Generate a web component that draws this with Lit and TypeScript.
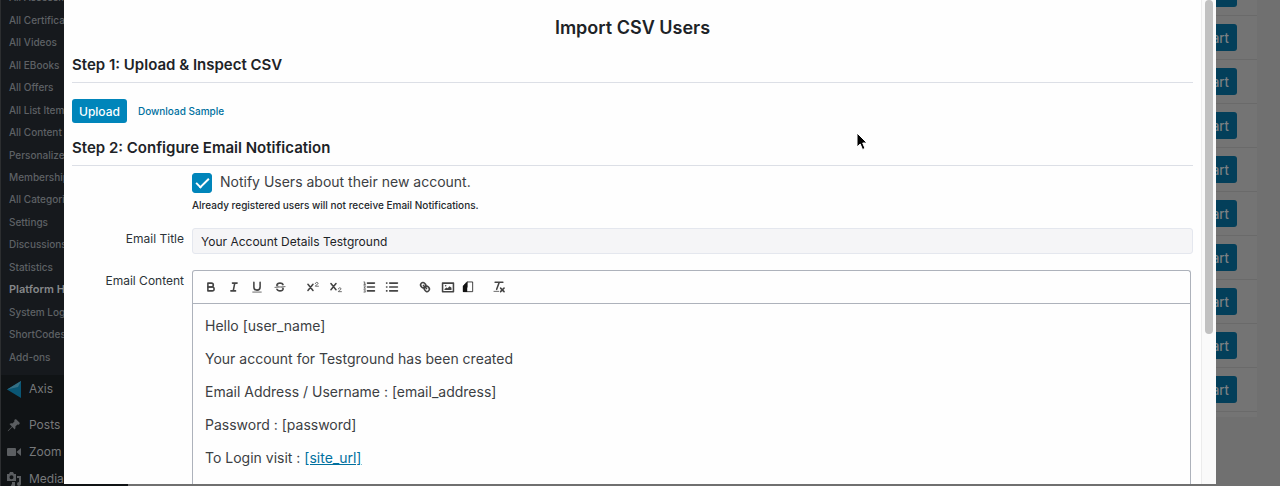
import { LitElement, html, svg, css } from "lit";
import { customElement, state } from "lit/decorators.js";

const MENU = ["All Assessments", "All Certificates", "All Videos", "All EBooks", "All Offers", "All List Items", "All Content", "Personalized", "Memberships", "All Categories", "Settings", "Discussions", "Statistics", "Platform Help", "System Logs", "ShortCodes", "Add-ons"];

const ICONS: Record<string, any> = {
  Bold: svg`<path d="M5,4H9.5A2.5,2.5,0,0,1,9.5,9H5Z"/><path d="M5,9h5.5A2.5,2.5,0,0,1,10.500,14H5Z"/>`,
  Italic: svg`<path d="M7,4H13M5,14H11M8,14L10,4"/>`,
  Underline: svg`<path d="M5,3V9a4,4,0,0,0,8,0V3"/><rect class="f" height="1" width="12" x="3" y="15"/>`,
  Strike: svg`<path class="t" d="M15.500,8.500L2.500,9.500"/><path class="f" d="M9.007,8C6.542,7.791,6,7.519,6,6.5,6,5.792,7.283,5,9,5c1.571,0,2.765.679,2.969,1.309a1,1,0,0,0,1.9-.617C13.356,4.106,11.354,3,9,3,6.2,3,4,4.538,4,6.5a3.2,3.2,0,0,0,.5,1.843Z"/><path class="f" d="M8.984,10C11.457,10.208,12,10.479,12,11.5c0,.708-1.283,1.5-3,1.5-1.571,0-2.765-.679-2.969-1.309a1,1,0,1,0-1.9.617C4.644,13.894,6.646,15,9,15c2.8,0,5-1.538,5-3.5a3.2,3.2,0,0,0-.5-1.843Z"/>`,
  Superscript: svg`<path d="M2.500,5.500L9,13.500M9,5.500L2.500,13.500"/><path class="t" d="M12,4.500C12,2.500 15.500,2.500 15.500,4.500C15.500,5.700 12,6.500 12,8H16"/>`,
  Subscript: svg`<path d="M2.500,4.500L9,12.500M9,4.500L2.500,12.500"/><path class="t" d="M12,11.500C12,9.500 15.500,9.500 15.500,11.500C15.500,12.700 12,13.500 12,15H16"/>`,
  "Ordered list": svg`<path d="M7,4H16M7,9H16M7,14H16"/><path class="t" d="M2.500,2.500H3.500V5.500M2.500,5.500H4.500M2.500,7.500H4.500L2.500,10.500H4.500M2.500,12.500H4.500L3.500,14L4.500,15.500H2.500"/>`,
  "Bullet list": svg`<path d="M6,4H16M6,9H16M6,14H16M2,4H2.500M2,9H2.500M2,14H2.500"/>`,
  Link: svg`<path d="M7,7L11,11"/><path d="M8.9,4.577a3.476,3.476,0,0,1,.36,4.679A3.476,3.476,0,0,1,4.577,8.9C3.185,7.5,2.035,6.4,4.217,4.217S7.5,3.185,8.9,4.577Z"/><path d="M13.423,9.1a3.476,3.476,0,0,0-4.679-.36,3.476,3.476,0,0,0,.36,4.679c1.392,1.392,2.5,2.542,4.679.36S14.815,10.5,13.423,9.1Z"/>`,
  Image: svg`<rect height="11" width="14" x="2" y="4"/><circle class="f" cx="6" cy="7.500" r="1"/><path class="f" d="M4.500,13V11.500L7,9.500L8.500,10.500L11,8L13.500,10V13Z"/>`,
  File: svg`<path class="k" d="M8,2.500H15V15H3V8Z"/><path class="b" d="M2.500,8L8.500,2V9.500H8V15.500H2.500Z"/>`,
  "Clear formatting": svg`<path d="M4,3H14M6,12L9.350,3M11,10.500L15.500,15M15.500,10.500L11,15"/><rect class="f" height="1" width="7" x="2" y="14"/>`,
};

const GROUPS = [
  ["Bold", "Italic", "Underline", "Strike"],
  ["Superscript", "Subscript"],
  ["Ordered list", "Bullet list"],
  ["Link", "Image", "File"],
  ["Clear formatting"],
];

@customElement("admin-backdrop")
class AdminBackdrop extends LitElement {
  static styles = css`
    :host { display: flex; height: 100%; overflow: hidden; background: #707070; }
    a { color: inherit; text-decoration: none; }
    .side { width: 128px; flex: none; box-sizing: border-box; background: #101315; border-left: 1px solid #2c2e30; color: #77797b; font-size: 13px; white-space: nowrap; overflow: hidden; }
    .sub { display: grid; grid-auto-rows: 1fr; align-items: center; height: 382px; margin: -14px 0 0; padding: 0 0 7px 8px; background: #16191d; color: #5e6165; font-size: 10px; font-weight: 500; list-style: none; }
    .current { font-size: 11px; font-weight: 600; color: #85878a; }
    .top { display: flex; align-items: center; gap: 8px; padding-left: 6px; height: 27px; font-size: 12px; }
    .axis { margin-bottom: 9px; }
    .top svg { width: 14px; height: 14px; flex: none; fill: #5b5e61; }
    .main { flex: 1; display: flex; justify-content: flex-end; align-items: flex-start; }
    .card { display: flex; flex-direction: column; margin: -28px 23px 0 0; padding-bottom: 5px; background: #747474; }
    .row { display: flex; align-items: center; justify-content: flex-end; height: 44px; box-sizing: border-box; border-bottom: 1px solid #6a6a6a; padding: 0 20px 0 600px; }
    .start { box-sizing: border-box; height: 27px; width: 52px; padding: 0 8px 0 0; text-align: right; border: 0; border-radius: 3px; background: #033f5a; color: #7d8183; font: 500 13px Inter, sans-serif; }
  `;
  render() {
    return html`
      <nav class="side">
        <ul class="sub">
          ${MENU.map((m) => html`<li class=${m === "Platform Help" ? "current" : "item"}><a href="#">${m}</a></li>`)}
        </ul>
        <a class="top axis" href="#"><svg viewBox="0 0 14 14" overflow="visible"><path fill="#0a5674" d="M0,7.500L14,-1V16Z"/><path fill="#357085" d="M0,7.500L14,-1L11,5Z"/></svg>Axis</a>
        <a class="top" href="#"><svg viewBox="0 0 20 20"><path d="M10.400 3.000l1-.9c.6-.6 1.500-.3 2 .2l4.300 4.300c.6.6.7 1.500.1 2.100l-1 .8-1.900-.2-2.900 3c.3 1.700 0 3.200-1 4.100l-3.400-3.400L2 18.600 1 19l.500-1.100 5.500-5.700-3.500-3.500c1-1 2.700-1.300 4.200-.9l2.900-2.900z"/></svg>Posts</a>
        <a class="top" href="#"><svg viewBox="0 0 14 14"><rect x="0" y="3" width="9" height="8" rx="1"/><path d="M9.500,7L14,3V11Z"/></svg>Zoom Meeting</a>
        <a class="top" href="#"><svg viewBox="0 0 14 14"><path fill-rule="evenodd" d="M0,2H2L3,0H6L7,2H9V9H0ZM4.500,3.300A2,2,0,1,0,4.500,7.300A2,2,0,1,0,4.500,3.300Z"/><path d="M10,4H14V12A2,2,0,1,1,12,10V6H10ZM5,10H8V14A2,2,0,1,1,5,12Z"/></svg>Media</a>
      </nav>
      <div class="main">
        <div class="card">
          ${Array.from({ length: 10 }, () => html`<div class="row"><button class="start">Start</button></div>`)}
        </div>
      </div>`;
  }
}

@customElement("import-dialog")
class ImportDialog extends LitElement {
  @state() private notify = true;

  static styles = css`
    :host { display: flex; background: #fefefe; overflow: hidden; color: #1d2327; }
    .body { flex: 1; padding: 16px 8px 0; display: flex; flex-direction: column; min-width: 0; }
    h1, h2, p { margin: 0; }
    h1 { font-size: 18px; line-height: 24px; font-weight: 600; text-align: center; }
    h2 { font-size: 15px; line-height: 24px; font-weight: 600; padding-bottom: 5px; border-bottom: 1px solid #dcdfe6; }
    .first { margin-top: 13px; }
    .actions { display: flex; align-items: center; gap: 11px; padding: 16px 0 13px; }
    .upload { height: 24px; padding: 0 7px; border: 0; border-radius: 3px; background: #0085ba; color: #fff; font: 500 12px Inter, sans-serif; }
    .sample { font-size: 10px; font-weight: 500; color: #00709e; text-decoration: none; }
    .form { display: grid; grid-template-columns: 112px minmax(0, 1fr); column-gap: 8px; flex: 1; grid-template-rows: auto auto 1fr; }
    .notify { grid-column: 2; padding-top: 7px; }
    .check { display: flex; align-items: flex-start; gap: 8px; font-size: 14px; line-height: 18px; color: #3c4043; }
    .check input { appearance: none; width: 20px; height: 20px; margin: 0; border-radius: 3px; border: 1px solid #0085ba; background: #fff; display: grid; place-items: center; }
    .check input:checked { background: #0085ba; }
    .check input:checked::before { content: ""; width: 11px; height: 5px; border: solid #fff; border-width: 0 0 2px 2px; transform: translateY(-2px) rotate(-45deg); }
    .hint { font-size: 10px; font-weight: 500; line-height: 14px; padding: 5px 0 16px; color: #24282c; }
    .label { font-size: 12px; line-height: 22px; text-align: right; color: #2c3338; }
    .title { box-sizing: border-box; width: 100%; height: 26px; padding: 0 8px; border: 1px solid #e4e7ee; border-radius: 3px; background: #f5f5f7; color: #1d2327; font: 12px Inter, sans-serif; margin-bottom: 16px; }
    .editor { border: 1px solid #adb2bb; border-bottom: 0; border-radius: 3px 3px 0 0; margin-right: 2px; }
    .tools { display: flex; gap: 10px; padding: 5px 6px; border-bottom: 1px solid #adb2bb; }
    .group { display: flex; }
    .tool { width: 23px; height: 22px; padding: 0; border: 0; background: none; display: grid; place-items: center; color: #444; }
    .tool:nth-child(3):last-child { width: 18px; }
    .tool svg { width: 14px; height: 14px; fill: none; stroke: currentColor; stroke-width: 2; stroke-linecap: round; stroke-linejoin: round; }
    .tool .f { fill: #444; stroke: none; }
    .tool .t { stroke-width: 1; }
    .tool .k { fill: #fff; stroke: #111; stroke-width: 1; }
    .tool .b { fill: #111; stroke: none; }
    .text { display: flex; flex-direction: column; gap: 13px; padding: 12px; font-size: 14px; line-height: 20px; color: #3c4043; outline: none; }
    .text a { color: #00709e; }
    .scroll { width: 15px; box-sizing: border-box; flex: none; background: #fafafa; border-left: 1px solid #ececec; padding: 0 3px; }
    .thumb { width: 8px; height: 69%; background: #c1c1c1; border-radius: 4px; }
  `;
  render() {
    return html`
      <div class="body">
        <h1>Import CSV Users</h1>
        <h2 class="first">Step 1: Upload &amp; Inspect CSV</h2>
        <div class="actions">
          <button class="upload">Upload</button>
          <a class="sample" href="#">Download Sample</a>
        </div>
        <h2>Step 2: Configure Email Notification</h2>
        <div class="form">
          <div class="notify">
            <label class="check"><input type="checkbox" .checked=${this.notify} @change=${(e: Event) => (this.notify = (e.target as HTMLInputElement).checked)}>Notify Users about their new account.</label>
            <p class="hint">Already registered users will not receive Email Notifications.</p>
          </div>
          <label class="label" for="title">Email Title</label>
          <div><input class="title" id="title" type="text" .value=${"Your Account Details Testground"}></div>
          <div class="label" id="content">Email Content</div>
          <div class="editor">
            <div class="tools">
              ${GROUPS.map((g) => html`<div class="group">${g.map((n) => html`<button class="tool" aria-label=${n}><svg viewBox="0 0 18 18">${ICONS[n]}</svg></button>`)}</div>`)}
            </div>
            <div class="text" role="textbox" aria-multiline="true" aria-labelledby="content" contenteditable="true" spellcheck="false"><p>Hello [user_name]</p><p>Your account for Testground has been created</p><p>Email Address / Username : [email_address]</p><p>Password : [password]</p><p>To Login visit : <a href="#">[site_url]</a></p></div>
          </div>
        </div>
      </div>
      <div class="scroll"><div class="thumb"></div></div>`;
  }
}

@customElement("app-root")
class AppRoot extends LitElement {
  static styles = css`
    :host { display: block; position: relative; height: 100vh; overflow: hidden; font-family: Inter, sans-serif; }
    .dialog { position: absolute; inset: 0 5% 2px; }
    .cursor { position: absolute; left: 67%; top: 27%; width: 12px; height: 19px; margin: 1px 0 0 -2px; }
  `;
  render() {
    return html`
      <admin-backdrop></admin-backdrop>
      <import-dialog class="dialog"></import-dialog>
      <svg class="cursor" viewBox="0 0 12 19"><path d="M1,1V15L4.200,12L6.500,17.500L9,16.400L6.700,11H11Z" fill="#000" stroke="#fff"/></svg>`;
  }
}
